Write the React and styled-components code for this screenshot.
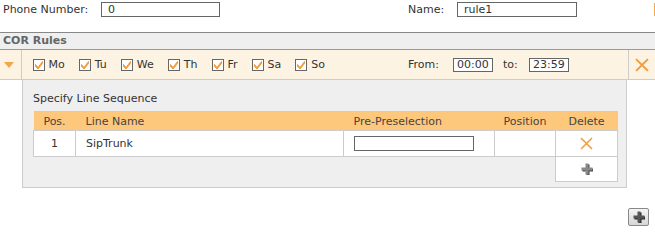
import React from 'react';
import styled, { createGlobalStyle } from 'styled-components';

const GlobalStyle = createGlobalStyle`
  body {
    margin: 0;
    font-family: "DejaVu Sans", Verdana, sans-serif;
    font-size: 11px;
    color: #333;
    background: #fff;
  }
`;

const Page = styled.div`
  width: 655px;
  height: 232px;
  overflow: hidden;
`;

const TopRow = styled.div`
  display: flex;
  align-items: center;
  height: 33px;
  padding-left: 3px;
  box-sizing: border-box;
  border-bottom: 1px solid #888;
  padding-bottom: 13px;
`;

const Field = styled.div`
  display: flex;
  align-items: center;
  width: ${p => p.width}px;
`;

const Label = styled.span`
  width: ${p => p.width}px;
  white-space: nowrap;
`;

const TextInput = styled.div`
  width: ${p => p.width}px;
  height: ${p => p.height || 15}px;
  box-sizing: border-box;
  border: 1px solid #666;
  background: #fff;
  padding-left: ${p => p.pad ?? 6}px;
  line-height: ${p => (p.height || 15) - 2}px;
  font-size: 11px;
`;

const EdgeMark = styled.div`
  margin-left: auto;
  width: 1px;
  height: 13px;
  background: #f5a94a;
`;

const SectionHeader = styled.div`
  height: 16px;
  line-height: 16px;
  background: #efefef;
  border-bottom: 1px solid #999;
  padding-left: 3px;
  font-weight: bold;
  color: #666;
`;

const RuleRow = styled.div`
  display: flex;
  align-items: stretch;
  height: 30px;
  background: #fdf3e3;
  border-bottom: 1px solid #ccc;
  box-sizing: border-box;
`;

const ToggleCell = styled.div`
  width: 22px;
  border-right: 1px solid #ccc;
  box-sizing: border-box;
  display: flex;
  align-items: center;
  padding-left: 4px;
`;

const Days = styled.div`
  display: flex;
  align-items: center;
  gap: 14px;
  padding-left: 11px;
  width: 386px;
`;

const Day = styled.label`
  display: flex;
  align-items: center;
  gap: 4px;
`;

const Box = styled.span`
  width: 12px;
  height: 12px;
  box-sizing: border-box;
  border: 1px solid #666;
  background: #fff;
  display: flex;
  align-items: center;
  justify-content: center;
`;

const TimeArea = styled.div`
  display: flex;
  align-items: center;
  width: 226px;
`;

const DeleteCell = styled.div`
  margin-left: auto;
  width: 27px;
  border-left: 1px solid #ccc;
  display: flex;
  align-items: center;
  justify-content: center;
`;

const Panel = styled.div`
  margin-left: 22px;
  width: 605px;
  box-sizing: border-box;
  background: #efefef;
  border-left: 1px solid #ccc;
  border-right: 1px solid #ccc;
  border-bottom: 1px solid #ccc;
  padding: 12px 10px 5px 10px;
`;

const Title = styled.div`
  height: 19px;
`;

const Table = styled.table`
  border-collapse: collapse;
  width: 584px;
  table-layout: fixed;
  font-size: 11px;
  color: #333;
`;

const Th = styled.th`
  background: #fec87c;
  font-weight: normal;
  height: 18px;
  padding: 0 0 0 ${p => (p.left ? 10 : 0)}px;
  text-align: ${p => (p.left ? 'left' : 'center')};
  border-top: 1px solid #ccc;
  color: #444;
`;

const Td = styled.td`
  background: ${p => (p.empty ? 'transparent' : '#fff')};
  border: ${p => (p.empty ? 'none' : '1px solid #ccc')};
  height: ${p => p.h}px;
  box-sizing: border-box;
  padding: 0 0 0 ${p => (p.left ? 10 : 0)}px;
  text-align: ${p => (p.left ? 'left' : 'center')};
  vertical-align: middle;
`;

const IconWrap = styled.div`
  display: flex;
  justify-content: center;
  align-items: center;
`;

const Footer = styled.div`
  display: flex;
  justify-content: flex-end;
  padding: 20px 6px 0 0;
`;

const AddButton = styled.div`
  width: 21px;
  height: 18px;
  box-sizing: border-box;
  border: 1px solid #888;
  border-radius: 2px;
  background: linear-gradient(#f4f4f4, #d6d6d6);
  display: flex;
  align-items: center;
  justify-content: center;
`;

const Triangle = () => (
  <svg width="10" height="6" viewBox="0 0 10 6">
    <path d="M0 0 L10 0 L5 6 Z" fill="#f3a54a" />
  </svg>
);

const Check = () => (
  <svg width="10" height="10" viewBox="0 0 10 10">
    <path d="M1.5 4.5 L4 7.5 L8.5 1.5 L8.5 3.5 L4 9 L1.5 6.5 Z" fill="#f39a3a" stroke="#f39a3a" strokeWidth="1" strokeLinejoin="round" />
  </svg>
);

const Cross = ({ size = 13, width = 1.8 }) => (
  <svg width={size} height={size} viewBox="0 0 13 13">
    <path d="M1 1 L12 12 M12 1 L1 12" stroke="#f39a3a" strokeWidth={width} />
  </svg>
);

const Plus = ({ color = '#666', shadow = '#333' }) => (
  <svg width="12" height="12" viewBox="0 0 12 12">
    <path d="M5 1 H8 V5 H12 V8 H8 V12 H5 V8 H1 V5 H5 Z" fill={shadow} transform="translate(0.5 0.5)" />
    <path d="M4.5 0.5 H7.5 V4.5 H11.5 V7.5 H7.5 V11.5 H4.5 V7.5 H0.5 V4.5 H4.5 Z" fill={color} />
  </svg>
);

const days = ['Mo', 'Tu', 'We', 'Th', 'Fr', 'Sa', 'So'];

export default function App() {
  return (
    <Page>
      <GlobalStyle />
      <TopRow>
        <Field width={405}>
          <Label width={98}>Phone Number:</Label>
          <TextInput width={119}>0</TextInput>
        </Field>
        <Field>
          <Label width={49}>Name:</Label>
          <TextInput width={120}>rule1</TextInput>
        </Field>
        <EdgeMark />
      </TopRow>
      <SectionHeader>COR Rules</SectionHeader>
      <RuleRow>
        <ToggleCell>
          <Triangle />
        </ToggleCell>
        <Days>
          {days.map(d => (
            <Day key={d}>
              <Box><Check /></Box>
              {d}
            </Day>
          ))}
        </Days>
        <TimeArea>
          <Label width={45}>From:</Label>
          <TextInput width={40} height={14} pad={3}>00:00</TextInput>
          <Label width={26} style={{ paddingLeft: 10 }}>to:</Label>
          <TextInput width={40} height={14} pad={3}>23:59</TextInput>
        </TimeArea>
        <DeleteCell>
          <Cross size={14} />
        </DeleteCell>
      </RuleRow>
      <Panel>
        <Title>Specify Line Sequence</Title>
        <Table>
          <colgroup>
            <col style={{ width: 42 }} />
            <col style={{ width: 268 }} />
            <col style={{ width: 151 }} />
            <col style={{ width: 61 }} />
            <col style={{ width: 62 }} />
          </colgroup>
          <thead>
            <tr>
              <Th>Pos.</Th>
              <Th left>Line Name</Th>
              <Th left>Pre-Preselection</Th>
              <Th>Position</Th>
              <Th>Delete</Th>
            </tr>
          </thead>
          <tbody>
            <tr>
              <Td h={26}>1</Td>
              <Td h={26} left>SipTrunk</Td>
              <Td h={26} left>
                <TextInput width={120} height={15} />
              </Td>
              <Td h={26} />
              <Td h={26}>
                <IconWrap><Cross size={13} width={1.5} /></IconWrap>
              </Td>
            </tr>
            <tr>
              <Td h={25} empty />
              <Td h={25} empty />
              <Td h={25} empty />
              <Td h={25} empty />
              <Td h={25}>
                <IconWrap><Plus color="#888" shadow="#444" /></IconWrap>
              </Td>
            </tr>
          </tbody>
        </Table>
      </Panel>
      <Footer>
        <AddButton>
          <Plus color="#555" shadow="#222" />
        </AddButton>
      </Footer>
    </Page>
  );
}
